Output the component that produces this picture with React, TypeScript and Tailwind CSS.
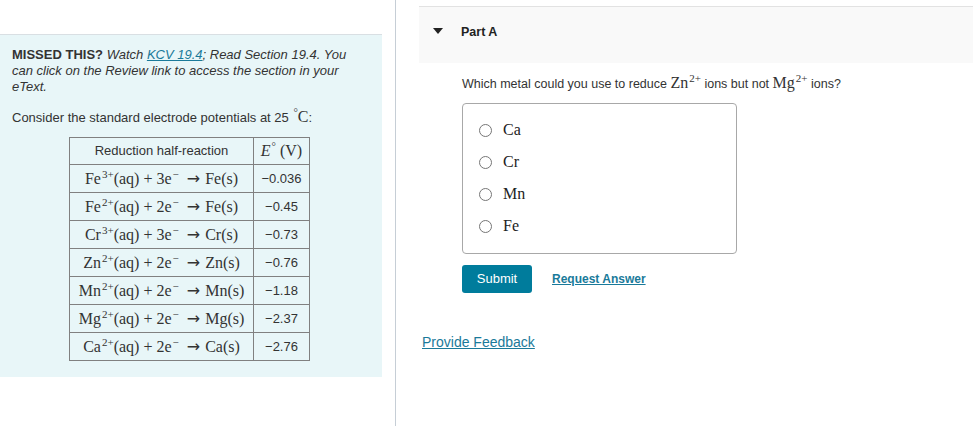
import React from 'react'

const serif = { fontFamily: '"Liberation Serif", "DejaVu Serif", serif' }

function Sup({ children }: { children: React.ReactNode }) {
  return <span className="relative -top-[6px] text-[11px] leading-none ml-[1px]">{children}</span>
}

function Arrow() {
  return (
    <span className="ml-[8px] mr-[5px] text-[16px]" style={{ fontFamily: '"DejaVu Sans", sans-serif' }}>
      →
    </span>
  )
}

function Ion({ el, ch, n, prod }: { el: string; ch: string; n: string; prod: string }) {
  return (
    <span className="whitespace-nowrap text-[16px]" style={serif}>
      {el}
      <Sup>{ch}</Sup>
      (aq)<span className="mx-[4px]">+</span>
      {n}e<Sup>−</Sup>
      <Arrow />
      {prod}(s)
    </span>
  )
}

const rows = [
  ['Fe', '3+', '3', 'Fe', '−0.036'],
  ['Fe', '2+', '2', 'Fe', '−0.45'],
  ['Cr', '3+', '3', 'Cr', '−0.73'],
  ['Zn', '2+', '2', 'Zn', '−0.76'],
  ['Mn', '2+', '2', 'Mn', '−1.18'],
  ['Mg', '2+', '2', 'Mg', '−2.37'],
  ['Ca', '2+', '2', 'Ca', '−2.76'],
]

export default function App() {
  return (
    <div
      className="w-[973px] h-[426px] bg-white flex text-[#333] overflow-hidden"
      style={{ fontFamily: '"Liberation Sans", Arial, sans-serif' }}
    >
      {/* left column */}
      <div className="w-[395px] shrink-0 pt-[34px]">
        <div className="w-[382px] bg-[#e8f6f8] border-t border-[#d9dfe3] pt-[12px] pb-[16px] px-[12px]">
          <div className="text-[13px] leading-[16px]">
            <p>
              <b>MISSED THIS?</b> <i>Watch</i> <i className="text-[#1a7a9a] underline">KCV 19.4</i>
              <i>; Read Section 19.4. You</i>
            </p>
            <p>
              <i>can click on the Review link to access the section in your</i>
            </p>
            <p>
              <i>eText.</i>
            </p>
          </div>
          <p className="text-[13px] leading-[16px] mt-[14px]">
            Consider the standard electrode potentials at 25{' '}
            <span style={serif} className="text-[16px]">
              <Sup>°</Sup>C
            </span>
            :
          </p>
          <table className="ml-[57px] mt-[11px] w-[240px] table-fixed border-collapse border border-[#808080]">
            <colgroup>
              <col className="w-[184px]" />
              <col className="w-[56px]" />
            </colgroup>
            <thead>
              <tr className="h-[27px]">
                <th className="border border-[#808080] font-normal text-[13px]">Reduction half-reaction</th>
                <th className="border border-[#808080] font-normal text-[16px]" style={serif}>
                  <i>E</i>
                  <Sup>°</Sup> (V)
                </th>
              </tr>
            </thead>
            <tbody>
              {rows.map(r => (
                <tr key={r[0] + r[1]} className="h-[28px]">
                  <td className="border border-[#808080] text-center">
                    <Ion el={r[0]} ch={r[1]} n={r[2]} prod={r[3]} />
                  </td>
                  <td className="border border-[#808080] text-center text-[13px]">{r[4]}</td>
                </tr>
              ))}
            </tbody>
          </table>
        </div>
      </div>

      {/* right column */}
      <div className="flex-1 border-l border-[#c6ced6] pt-[6px] pl-[23px]">
        <div className="h-[57px] bg-[#f9f9f9] border-t border-[#e2e2e2] flex items-start pt-[16px] pl-[14px]">
          <svg width="10" height="7" viewBox="0 0 10 7" className="mr-[18px] mt-[5px]">
            <path d="M0 0 L10 0 L5 6 Z" fill="#222" />
          </svg>
          <span className="font-bold text-[12.5px] text-[#222]">Part A</span>
        </div>
        <div className="pl-[43px]">
          <p className="text-[12.5px] mt-[8px]">
            Which metal could you use to reduce{' '}
            <span style={serif} className="text-[16px]">
              Zn<Sup>2+</Sup>
            </span>{' '}
            ions but not{' '}
            <span style={serif} className="text-[16px]">
              Mg<Sup>2+</Sup>
            </span>{' '}
            ions?
          </p>
          <div className="w-[275px] h-[151px] mt-[8px] border border-[#a8a8a8] rounded-[4px] pt-[17px] pl-[16px] flex flex-col gap-[14px]">
            {['Ca', 'Cr', 'Mn', 'Fe'].map(m => (
              <label key={m} className="flex items-center h-[18px]">
                <span className="w-[13px] h-[13px] rounded-full border border-[#767676] bg-white mr-[11px]" />
                <span style={serif} className="text-[16px] text-[#222]">{m}</span>
              </label>
            ))}
          </div>
          <div className="flex items-center mt-[11px]">
            <button className="w-[70px] h-[28px] bg-[#007c9c] text-white text-[13px] rounded-[3px]">Submit</button>
            <span className="ml-[20px] text-[12px] font-bold text-[#1a7a9a] underline">Request Answer</span>
          </div>
        </div>
        <p className="mt-[41px] text-[14px] text-[#1a7a9a] underline leading-[16px] ml-[3px]">Provide Feedback</p>
      </div>
    </div>
  )
}
